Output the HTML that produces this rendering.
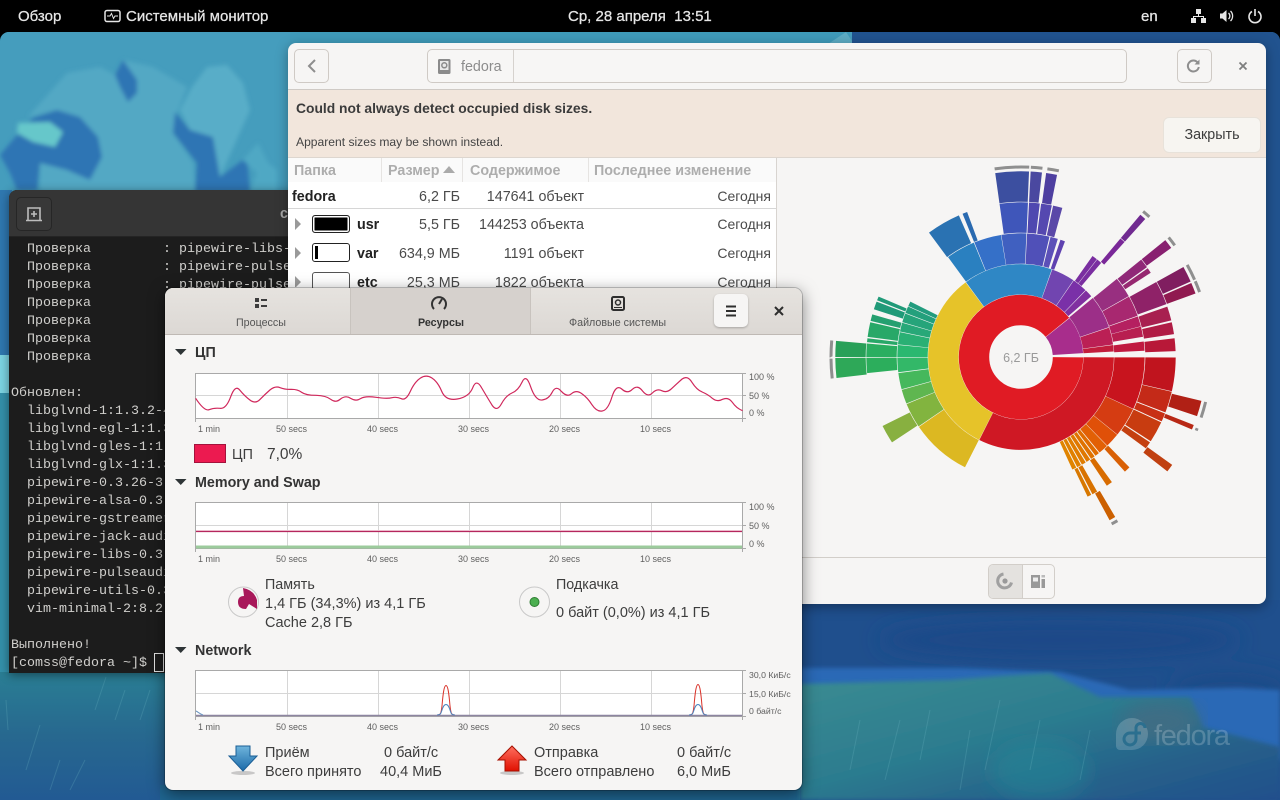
<!DOCTYPE html>
<html lang="ru"><head><meta charset="utf-8"><title>Системный монитор</title>
<style>
html,body{margin:0;padding:0;width:1280px;height:800px;overflow:hidden;background:#000;font-family:"Liberation Sans","Noto Sans CJK SC",sans-serif}
.a{position:absolute}
.t{position:absolute;white-space:nowrap;line-height:16px;font-size:14.3px;color:#3d3d3d;margin-top:1px}
.n{margin-top:0}
.b{font-weight:bold}
.r{text-align:right}
svg{position:absolute;display:block}
.h{font-size:14.3px;font-weight:bold;color:#adadad}
.sep{position:absolute;width:1px;background:#e6e4e2}
.bar{position:absolute;left:312px;width:36px;height:16px;border:1px solid #222;border-radius:3px;background:#fff}
.gt{font:9px "Liberation Sans",sans-serif;fill:#5e5e5e}
.top{font-size:15px;color:#e6e6e6;-webkit-text-stroke:.25px #e6e6e6}
.tab{font-size:10.7px;margin-top:0}
</style></head>
<body>
<div class="a" style="left:0;top:32px;width:1280px;height:768px;border-radius:9px 9px 0 0;overflow:hidden;background:#2a7a9c">
<svg width="1280" height="768" viewBox="0 32 1280 768" style="left:0;top:0">
<defs>
<filter id="bl"><feGaussianBlur stdDeviation="2"/></filter>
<filter id="bl2"><feGaussianBlur stdDeviation="10"/></filter>
<linearGradient id="gl" x1="0" y1="0" x2="0" y2="1"><stop offset="0" stop-color="#2a7e94"/><stop offset=".5" stop-color="#27688f"/><stop offset="1" stop-color="#225a93"/></linearGradient>
<linearGradient id="gr" x1="0" y1="0" x2="1" y2="1"><stop offset="0" stop-color="#3b8c92"/><stop offset=".45" stop-color="#2c7c8f"/><stop offset=".75" stop-color="#265f8a"/><stop offset="1" stop-color="#214f8c"/></linearGradient>
<linearGradient id="ab" x1="0" y1="0" x2="0" y2="1"><stop offset="0" stop-color="#6fb4dc"/><stop offset="1" stop-color="#1b6aa8"/></linearGradient>
<linearGradient id="ar" x1="0" y1="0" x2="0" y2="1"><stop offset="0" stop-color="#ff7060"/><stop offset="1" stop-color="#e01000"/></linearGradient>
</defs>
<rect x="0" y="32" width="860" height="170" fill="#459dbd"/>
<rect x="290" y="32" width="560" height="12" fill="#3f9ab9"/>
<polygon points="828,44 846,32 854,44" fill="#5dacc4"/>
<rect x="852" y="32" width="428" height="768" fill="#21538f"/>
<rect x="0" y="190" width="12" height="165" fill="#2f78b0"/>
<rect x="0" y="355" width="12" height="38" fill="#7cd4e2"/>
<rect x="0" y="393" width="12" height="280" fill="#3490aa"/>
<rect x="0" y="672" width="300" height="128" fill="url(#gl)"/>
<rect x="160" y="785" width="700" height="15" fill="#1f6590"/>
<rect x="800" y="600" width="480" height="200" fill="#1f4f8d"/>
<g filter="url(#bl2)"><ellipse cx="1060" cy="640" rx="180" ry="20" fill="#1a4a88"/><ellipse cx="1230" cy="690" rx="60" ry="18" fill="#1b4b88"/></g>
<polygon points="800,668 960,668 1060,672 1130,690 1240,688 1280,690 1280,760 800,760" fill="#2a69b6" filter="url(#bl)"/>
<polygon points="800,684 950,680 1000,676 1050,673 1100,697 1190,697 1203,727 1280,747 1280,800 800,800" fill="url(#gr)" filter="url(#bl)"/>
<ellipse cx="1160" cy="722" rx="40" ry="20" fill="#3f6d84" filter="url(#bl2)"/>
<ellipse cx="1040" cy="770" rx="50" ry="30" fill="#1d8a96" fill-opacity=".5" filter="url(#bl2)"/>
<g filter="url(#bl)">
<polygon points="0,155 17,135 33,118 57,110 80,117 98,137 102,157 90,180 67,170 40,163 37,190 17,190 10,173" fill="#2f74b4"/>
<polygon points="28,117 67,73 100,67 115,75 123,60 153,67 187,87 177,113 173,133 193,163 195,192 40,192 40,163 67,170 90,180 102,157 98,137 80,117 57,110" fill="#52a8c4"/>
<polygon points="115,75 123,60 137,80 137,93 128,102 120,87" fill="#2f74b4"/>
<polygon points="175,112 173,133 197,163 195,192 250,192 247,157 220,177 213,137 190,130" fill="#2f74b4"/>
<polygon points="192,87 207,67 227,65 243,83 250,110 220,177 213,137 190,130 180,110" fill="#58adc8"/>
<polygon points="243,160 258,143 268,163 277,170 277,192 250,192 257,173" fill="#50a8c4"/>
<polygon points="18,123 50,122 63,132 55,147 33,142 17,133" fill="#66c7ca"/>
</g>
<g stroke="#6fb6c4" stroke-opacity=".25" stroke-width="1" fill="none">
<path d="M106,677 L95,710M125,690 L115,720M40,725 L26,770M60,760 L50,790M150,690 L140,720M6,700 L8,730M85,760 L70,790M900,720 L885,780M930,710 L920,760M1000,700 L985,770M1040,720 L1030,770M970,730 L960,790M860,720 L850,770M1090,730 L1080,780"/>
</g>
<path d="M1148 734a16 16 0 1 0-32 0v12a4 4 0 0 0 4 4h12a16 16 0 0 0 16-16z" fill="#fff" fill-opacity=".18"/>
<path d="M1136 731v-3a4.500 4.500 0 0 1 9 0M1136 731v8a6 6 0 1 1-6-6h11" fill="none" stroke="#2b6f8f" stroke-width="3"/>
<text x="1154" y="745" font-family="Liberation Sans" font-size="29" fill="#fff" fill-opacity=".2" textLength="76">fedora</text>
</svg>
</div>

<!-- terminal -->
<div class="a" style="left:9px;top:190px;width:300px;height:483px;background:#1c1c1c;border-radius:8px 8px 0 0;overflow:hidden;box-shadow:0 2px 10px rgba(0,0,0,.45)">
<div class="a" style="left:0;top:0;width:300px;height:46px;background:#353535;border-bottom:1px solid #242424"></div>
<div class="a" style="left:7px;top:7px;width:34px;height:32px;background:#383838;border:1px solid #262626;border-radius:5px"></div>
<svg style="left:16px;top:15px" width="18" height="18" viewBox="0 0 18 18"><path d="M3 15V3h12v12M1 15.500h16" fill="none" stroke="#bdbdbd" stroke-width="1.600"/><path d="M9 6v6M6 9h6" stroke="#bdbdbd" stroke-width="1.600"/></svg>
<div class="t n" style="left:271px;top:16px;color:#a8a8a8;font-weight:bold">с</div>
<pre class="a" style="left:2px;top:51px;margin:0;font:13.33px/18px 'Liberation Mono','Noto Sans CJK SC',monospace;color:#d0cfcc">  Проверка         : pipewire-libs-0.3.26-3
  Проверка         : pipewire-pulseaudio-0
  Проверка         : pipewire-pulseaudio-0
  Проверка
  Проверка
  Проверка
  Проверка

Обновлен:
  libglvnd-1:1.3.2-4
  libglvnd-egl-1:1.3
  libglvnd-gles-1:1.3
  libglvnd-glx-1:1.3
  pipewire-0.3.26-3
  pipewire-alsa-0.3.26
  pipewire-gstreamer
  pipewire-jack-audio
  pipewire-libs-0.3
  pipewire-pulseaudio
  pipewire-utils-0.3
  vim-minimal-2:8.2

Выполнено!
[comss@fedora ~]$</pre>
<div class="a" style="left:145px;top:463px;width:8px;height:17px;border:1px solid #e0e0e0"></div>
</div>

<!-- baobab -->
<div class="a" style="left:288px;top:43px;width:978px;height:561px;background:#f6f5f4;border-radius:8px;overflow:hidden;box-shadow:0 3px 12px rgba(0,0,0,.35)"></div>
<div class="a" style="left:288px;top:89px;width:978px;height:1px;background:#cfcac5"></div>
<div class="a" style="left:288px;top:90px;width:978px;height:67px;background:#f2e6dc;border-bottom:1px solid #ddd6cf"></div>
<div class="a" style="left:294px;top:49px;width:33px;height:32px;border:1px solid #cfcac5;border-radius:5px;background:#f6f5f4"></div>
<svg style="left:305px;top:58px" width="14" height="16" viewBox="0 0 14 16"><path d="M10 2L4 8l6 6" fill="none" stroke="#8e8e8e" stroke-width="2"/></svg>
<div class="a" style="left:427px;top:49px;width:698px;height:32px;border:1px solid #cfcac5;border-radius:5px;background:#f7f6f5"></div>
<div class="a" style="left:513px;top:50px;width:1px;height:32px;background:#d6d2ce"></div>
<svg style="left:437px;top:58px" width="15" height="17" viewBox="0 0 15 17"><rect x="1" y="1" width="12.500" height="15" rx="1.500" fill="#8b8b8b"/><rect x="3" y="3" width="8.500" height="9" fill="#e9e9e9"/><circle cx="7.300" cy="7.300" r="2.500" fill="none" stroke="#8b8b8b" stroke-width="1.500"/></svg>
<div class="t" style="left:461px;top:58px;color:#8c8c8c">fedora</div>
<div class="a" style="left:1177px;top:49px;width:33px;height:32px;border:1px solid #cfcac5;border-radius:5px"></div>
<svg style="left:1186px;top:58px" width="15" height="16" viewBox="0 0 15 16"><path d="M12 5a5.500 5.500 0 1 0 .8 4" fill="none" stroke="#8e8e8e" stroke-width="2"/><path d="M13.500 1.500v5h-5z" fill="#8e8e8e"/></svg>
<svg style="left:1238px;top:61px" width="10" height="10" viewBox="0 0 10 10"><path d="M1.500 1.500l7 7M8.500 1.500l-7 7" stroke="#7e7e7e" stroke-width="1.800"/></svg>
<div class="t b n" style="left:296px;top:100px;color:#3b3b3b;font-size:13.85px">Could not always detect occupied disk sizes.</div>
<div class="t n" style="left:296px;top:134px;font-size:12.1px;color:#444">Apparent sizes may be shown instead.</div>
<div class="a" style="left:1164px;top:118px;width:96px;height:34px;background:#f7f5f1;border-radius:5px;box-shadow:0 0 0 1px #e8e2da;text-align:center;font-size:14.3px;line-height:34px;color:#3d3d3d">Закрыть</div>

<div class="a" style="left:288px;top:158px;width:488px;height:399px;background:#fff;border-right:1px solid #d8d4d0"></div>
<div class="a" style="left:288px;top:158px;width:488px;height:24px;background:#fafafa"></div>
<div class="sep" style="left:381px;top:158px;height:24px"></div><div class="sep" style="left:462px;top:158px;height:24px"></div><div class="sep" style="left:588px;top:158px;height:24px"></div>
<div class="t h" style="left:294px;top:162px">Папка</div>
<div class="t h" style="left:388px;top:162px">Размер</div>
<svg style="left:443px;top:166px" width="12" height="7"><path d="M0 7L6 0l6 7z" fill="#aaa"/></svg>
<div class="t h" style="left:470px;top:162px">Содержимое</div>
<div class="t h" style="left:594px;top:162px">Последнее изменение</div>
<div class="t b" style="left:292px;top:188px;color:#222">fedora</div>
<div class="t r" style="left:390px;top:188px;width:70px;color:#4a4a4a">6,2 ГБ</div>
<div class="t r" style="left:464px;top:188px;width:120px;color:#4a4a4a">147641 объект</div>
<div class="t r n" style="left:689px;top:188px;width:82px;color:#4a4a4a;font-size:14px">Сегодня</div>
<div class="a" style="left:288px;top:208px;width:488px;height:1px;background:#d6d6d6"></div>
<svg style="left:294px;top:217px" width="8" height="70"><path d="M1 1l6 6-6 6zM1 30l6 6-6 6zM1 59l6 6-6 6z" fill="#9a9a9a"/></svg>
<div class="bar" style="top:215px;background:#000;box-shadow:inset 0 0 0 1.500px #fff"></div>
<div class="bar" style="top:243px;height:17px"><div class="a" style="left:2px;top:2px;width:3px;height:13px;background:#000"></div></div>
<div class="bar" style="top:272px;border-color:#555"></div>
<div class="t b" style="left:357px;top:216px;color:#222">usr</div>
<div class="t b" style="left:357px;top:245px;color:#222">var</div>
<div class="t b" style="left:357px;top:274px;color:#222">etc</div>
<div class="t r" style="left:390px;top:216px;width:70px;color:#4a4a4a">5,5 ГБ</div>
<div class="t r" style="left:390px;top:245px;width:70px;color:#4a4a4a">634,9 МБ</div>
<div class="t r" style="left:390px;top:274px;width:70px;color:#4a4a4a">25,3 МБ</div>
<div class="t r" style="left:464px;top:216px;width:120px;color:#4a4a4a">144253 объекта</div>
<div class="t r" style="left:464px;top:245px;width:120px;color:#4a4a4a">1191 объект</div>
<div class="t r" style="left:464px;top:274px;width:120px;color:#4a4a4a">1822 объекта</div>
<div class="t r n" style="left:689px;top:216px;width:82px;color:#4a4a4a;font-size:14px">Сегодня</div>
<div class="t r n" style="left:689px;top:245px;width:82px;color:#4a4a4a;font-size:14px">Сегодня</div>
<div class="t r n" style="left:689px;top:274px;width:82px;color:#4a4a4a;font-size:14px">Сегодня</div>

<svg style="left:778px;top:158px" width="488" height="399" viewBox="778 158 488 399">
<g transform="translate(1021 357)" fill="none" stroke-width="30.400">
<circle r="47" pathLength="360" stroke="#e01b24" stroke-dasharray="320.5 999" stroke-dashoffset="-.3"/>
<circle r="47" pathLength="360" stroke="#a82d8c" stroke-dasharray="35 999" stroke-dashoffset="-321.3"/>
<circle r="77.700" pathLength="360" stroke="#cf1824" stroke-dasharray="116.6 999" stroke-dashoffset="-.2"/>
<circle r="77.700" pathLength="360" stroke="#e6c329" stroke-dasharray="116.7 999" stroke-dashoffset="-117"/>
<circle r="77.700" pathLength="360" stroke="#2f87c5" stroke-dasharray="55.7 999" stroke-dashoffset="-234"/>
<circle r="77.700" pathLength="360" stroke="#7145b0" stroke-dasharray="14.7 999" stroke-dashoffset="-290"/>
<circle r="77.700" pathLength="360" stroke="#7a30a8" stroke-dasharray="9.3 999" stroke-dashoffset="-305"/>
<circle r="77.700" pathLength="360" stroke="#8030a0" stroke-dasharray="4.8 999" stroke-dashoffset="-314.7"/>
<circle r="77.700" pathLength="360" stroke="#9c2f88" stroke-dasharray="20.6 999" stroke-dashoffset="-321"/>
<circle r="77.700" pathLength="360" stroke="#bb2055" stroke-dasharray="10.7 999" stroke-dashoffset="-342"/>
<circle r="77.700" pathLength="360" stroke="#c21d3c" stroke-dasharray="4 999" stroke-dashoffset="-353"/>
<circle r="108.500" pathLength="360" stroke="#c8141e" stroke-dasharray="24.6 999" stroke-dashoffset="-.2"/>
<circle r="108.500" pathLength="360" stroke="#d53c12" stroke-dasharray="13.8 999" stroke-dashoffset="-25"/>
<circle r="108.500" pathLength="360" stroke="#e05008" stroke-dasharray="6.8 999" stroke-dashoffset="-39"/>
<circle r="108.500" pathLength="360" stroke="#e26005" stroke-dasharray="4.6 999" stroke-dashoffset="-46"/>
<circle r="108.500" pathLength="360" stroke="#e06c00" stroke-dasharray="2 999" stroke-dashoffset="-51"/>
<circle r="108.500" pathLength="360" stroke="#e07200" stroke-dasharray="2 999" stroke-dashoffset="-53.5"/>
<circle r="108.500" pathLength="360" stroke="#e07800" stroke-dasharray="2 999" stroke-dashoffset="-56"/>
<circle r="108.500" pathLength="360" stroke="#e07c00" stroke-dasharray="2 999" stroke-dashoffset="-58.5"/>
<circle r="108.500" pathLength="360" stroke="#e08000" stroke-dasharray="2 999" stroke-dashoffset="-61"/>
<circle r="108.500" pathLength="360" stroke="#e08400" stroke-dasharray="2 999" stroke-dashoffset="-63.5"/>
<circle r="108.500" pathLength="360" stroke="#dcb822" stroke-dasharray="28.7 999" stroke-dashoffset="-117"/>
<circle r="108.500" pathLength="360" stroke="#82b43f" stroke-dasharray="11.7 999" stroke-dashoffset="-146"/>
<circle r="108.500" pathLength="360" stroke="#5fb650" stroke-dasharray="6.7 999" stroke-dashoffset="-158"/>
<circle r="108.500" pathLength="360" stroke="#45b85c" stroke-dasharray="7.6 999" stroke-dashoffset="-165"/>
<circle r="108.500" pathLength="360" stroke="#33b868" stroke-dasharray="6.7 999" stroke-dashoffset="-173"/>
<circle r="108.500" pathLength="360" stroke="#2ab870" stroke-dasharray="5.7 999" stroke-dashoffset="-180"/>
<circle r="108.500" pathLength="360" stroke="#2ab074" stroke-dasharray="5.7 999" stroke-dashoffset="-186"/>
<circle r="108.500" pathLength="360" stroke="#28a878" stroke-dasharray="4.2 999" stroke-dashoffset="-192"/>
<circle r="108.500" pathLength="360" stroke="#26a47a" stroke-dasharray="4.2 999" stroke-dashoffset="-196.5"/>
<circle r="108.500" pathLength="360" stroke="#24a07c" stroke-dasharray="3.2 999" stroke-dashoffset="-201"/>
<circle r="108.500" pathLength="360" stroke="#229c7e" stroke-dasharray="2.2 999" stroke-dashoffset="-204.5"/>
<circle r="108.500" pathLength="360" stroke="#2a80c0" stroke-dasharray="13.7 999" stroke-dashoffset="-234"/>
<circle r="108.500" pathLength="360" stroke="#3570c8" stroke-dasharray="12.8 999" stroke-dashoffset="-248"/>
<circle r="108.500" pathLength="360" stroke="#4060c0" stroke-dasharray="11.7 999" stroke-dashoffset="-261"/>
<circle r="108.500" pathLength="360" stroke="#5050b8" stroke-dasharray="10.5 999" stroke-dashoffset="-273"/>
<circle r="108.500" pathLength="360" stroke="#5c50b8" stroke-dasharray="3.5 999" stroke-dashoffset="-284"/>
<circle r="108.500" pathLength="360" stroke="#5f42b0" stroke-dasharray="2.2 999" stroke-dashoffset="-288.8"/>
<circle r="108.500" pathLength="360" stroke="#7a2ea0" stroke-dasharray="2.5 999" stroke-dashoffset="-305.5"/>
<circle r="108.500" pathLength="360" stroke="#7a2ea0" stroke-dasharray="2.4 999" stroke-dashoffset="-308.2"/>
<circle r="108.500" pathLength="360" stroke="#982f80" stroke-dasharray="9.7 999" stroke-dashoffset="-321"/>
<circle r="108.500" pathLength="360" stroke="#a82870" stroke-dasharray="9.7 999" stroke-dashoffset="-331"/>
<circle r="108.500" pathLength="360" stroke="#b52060" stroke-dasharray="4.8 999" stroke-dashoffset="-341"/>
<circle r="108.500" pathLength="360" stroke="#b81f50" stroke-dasharray="4.8 999" stroke-dashoffset="-346"/>
<circle r="108.500" pathLength="360" stroke="#c01a40" stroke-dasharray="4.3 999" stroke-dashoffset="-353"/>
<circle r="139.500" pathLength="360" stroke="#c0141e" stroke-dasharray="12.6 999" stroke-dashoffset="-.2"/>
<circle r="139.500" pathLength="360" stroke="#c42a18" stroke-dasharray="8 999" stroke-dashoffset="-13"/>
<circle r="139.500" pathLength="360" stroke="#c83015" stroke-dasharray="3.2 999" stroke-dashoffset="-21.4"/>
<circle r="139.500" pathLength="360" stroke="#c83c10" stroke-dasharray="8 999" stroke-dashoffset="-25"/>
<circle r="139.500" pathLength="360" stroke="#c44010" stroke-dasharray="2.7 999" stroke-dashoffset="-33.5"/>
<circle r="139.500" pathLength="360" stroke="#d96005" stroke-dasharray="2.3 999" stroke-dashoffset="-45.5"/>
<circle r="139.500" pathLength="360" stroke="#d86c00" stroke-dasharray="2.3 999" stroke-dashoffset="-54"/>
<circle r="139.500" pathLength="360" stroke="#d87200" stroke-dasharray="2 999" stroke-dashoffset="-60.5"/>
<circle r="139.500" pathLength="360" stroke="#d87800" stroke-dasharray="1.5 999" stroke-dashoffset="-63"/>
<circle r="139.500" pathLength="360" stroke="#88b040" stroke-dasharray="7 999" stroke-dashoffset="-146.5"/>
<circle r="139.500" pathLength="360" stroke="#2cae5c" stroke-dasharray="5.7 999" stroke-dashoffset="-174"/>
<circle r="139.500" pathLength="360" stroke="#2aae60" stroke-dasharray="5 999" stroke-dashoffset="-180"/>
<circle r="139.500" pathLength="360" stroke="#28a868" stroke-dasharray="1.5 999" stroke-dashoffset="-185.5"/>
<circle r="139.500" pathLength="360" stroke="#28a868" stroke-dasharray="5.5 999" stroke-dashoffset="-187.5"/>
<circle r="139.500" pathLength="360" stroke="#25a070" stroke-dasharray="2.5 999" stroke-dashoffset="-193.5"/>
<circle r="139.500" pathLength="360" stroke="#209a78" stroke-dasharray="3 999" stroke-dashoffset="-198"/>
<circle r="139.500" pathLength="360" stroke="#209a78" stroke-dasharray="1.5 999" stroke-dashoffset="-201.5"/>
<circle r="139.500" pathLength="360" stroke="#2a72b2" stroke-dasharray="12.8 999" stroke-dashoffset="-233.5"/>
<circle r="139.500" pathLength="360" stroke="#2a6ab0" stroke-dasharray="1.8 999" stroke-dashoffset="-247.8"/>
<circle r="139.500" pathLength="360" stroke="#3f56ba" stroke-dasharray="10.6 999" stroke-dashoffset="-262"/>
<circle r="139.500" pathLength="360" stroke="#4f48b0" stroke-dasharray="4 999" stroke-dashoffset="-273"/>
<circle r="139.500" pathLength="360" stroke="#5548b0" stroke-dasharray="4 999" stroke-dashoffset="-277.5"/>
<circle r="139.500" pathLength="360" stroke="#5a48a8" stroke-dasharray="3.5 999" stroke-dashoffset="-282"/>
<circle r="139.500" pathLength="360" stroke="#7a2898" stroke-dasharray="2 999" stroke-dashoffset="-310"/>
<circle r="139.500" pathLength="360" stroke="#902878" stroke-dasharray="3.5 999" stroke-dashoffset="-321"/>
<circle r="139.500" pathLength="360" stroke="#962870" stroke-dasharray="2 999" stroke-dashoffset="-325"/>
<circle r="139.500" pathLength="360" stroke="#8f2268" stroke-dasharray="9 999" stroke-dashoffset="-331"/>
<circle r="139.500" pathLength="360" stroke="#a82050" stroke-dasharray="5.3 999" stroke-dashoffset="-341"/>
<circle r="139.500" pathLength="360" stroke="#b01c45" stroke-dasharray="4.5 999" stroke-dashoffset="-347"/>
<circle r="139.500" pathLength="360" stroke="#b81838" stroke-dasharray="4.8 999" stroke-dashoffset="-353"/>
<circle r="170.500" pathLength="360" stroke="#b02015" stroke-dasharray="4.9 999" stroke-dashoffset="-13.7"/>
<circle r="170.500" pathLength="360" stroke="#b82815" stroke-dasharray="1.5 999" stroke-dashoffset="-21.5"/>
<circle r="170.500" pathLength="360" stroke="#c04010" stroke-dasharray="2.5 999" stroke-dashoffset="-35.5"/>
<circle r="170.500" pathLength="360" stroke="#cc6000" stroke-dasharray="2 999" stroke-dashoffset="-59.5"/>
<circle r="170.500" pathLength="360" stroke="#2ea858" stroke-dasharray="6.2 999" stroke-dashoffset="-173.5"/>
<circle r="170.500" pathLength="360" stroke="#28a058" stroke-dasharray="5 999" stroke-dashoffset="-180"/>
<circle r="170.500" pathLength="360" stroke="#3c4fa0" stroke-dasharray="10.5 999" stroke-dashoffset="-262"/>
<circle r="170.500" pathLength="360" stroke="#4a48a0" stroke-dasharray="3.5 999" stroke-dashoffset="-273"/>
<circle r="170.500" pathLength="360" stroke="#4e3fa0" stroke-dasharray="3.4 999" stroke-dashoffset="-277.8"/>
<circle r="170.500" pathLength="360" stroke="#702a90" stroke-dasharray="2 999" stroke-dashoffset="-310"/>
<circle r="170.500" pathLength="360" stroke="#882070" stroke-dasharray="3 999" stroke-dashoffset="-321"/>
<circle r="170.500" pathLength="360" stroke="#801e60" stroke-dasharray="5 999" stroke-dashoffset="-331"/>
<circle r="170.500" pathLength="360" stroke="#901a50" stroke-dasharray="3.5 999" stroke-dashoffset="-336.5"/>
<g stroke="#8f8f8f" stroke-width="3">
<circle r="190" pathLength="360" stroke-dasharray="4.9 999" stroke-dashoffset="-13.7"/>
<circle r="190" pathLength="360" stroke-dasharray=".8 999" stroke-dashoffset="-22"/>
<circle r="190" pathLength="360" stroke-dasharray="2 999" stroke-dashoffset="-59.5"/>
<circle r="190" pathLength="360" stroke-dasharray="6 999" stroke-dashoffset="-173.5"/>
<circle r="190" pathLength="360" stroke-dasharray="5 999" stroke-dashoffset="-180"/>
<circle r="190" pathLength="360" stroke-dasharray="10.5 999" stroke-dashoffset="-262"/>
<circle r="190" pathLength="360" stroke-dasharray="3.5 999" stroke-dashoffset="-273"/>
<circle r="190" pathLength="360" stroke-dasharray="3.5 999" stroke-dashoffset="-278"/>
<circle r="190" pathLength="360" stroke-dasharray="2.5 999" stroke-dashoffset="-310"/>
<circle r="190" pathLength="360" stroke-dasharray="3 999" stroke-dashoffset="-321"/>
<circle r="190" pathLength="360" stroke-dasharray="5 999" stroke-dashoffset="-331"/>
<circle r="190" pathLength="360" stroke-dasharray="3.5 999" stroke-dashoffset="-336.5"/>
</g>
</g>
<text x="1021" y="362" text-anchor="middle" font-family="Liberation Sans" font-size="12.500" fill="#9a9a9a">6,2 ГБ</text>
</svg>
<div class="a" style="left:777px;top:557px;width:489px;height:1px;background:#d2cec9"></div>
<div class="a" style="left:988px;top:564px;width:65px;height:33px;border:1px solid #d2cec9;border-radius:5px;overflow:hidden"><div class="a" style="left:0;top:0;width:33px;height:33px;background:#e4e2df;border-right:1px solid #d2cec9"></div></div>
<svg style="left:996px;top:572px" width="18" height="18" viewBox="0 0 18 18"><circle cx="9" cy="9" r="2.600" fill="#999"/><path d="M15.500 10.500A7 7 0 1 1 7.500 2" fill="none" stroke="#a0a0a0" stroke-width="3"/></svg>
<svg style="left:1030px;top:574px" width="16" height="15" viewBox="0 0 16 15"><rect x="1" y="1" width="9" height="13" fill="#999"/><rect x="3" y="3.500" width="5" height="4" fill="#eee"/><rect x="11.500" y="5" width="3.500" height="9" fill="#999"/><rect x="11.500" y="1" width="3.500" height="2.500" fill="#bbb"/></svg>

<!-- system monitor -->
<div class="a" style="left:165px;top:288px;width:637px;height:502px;background:#f6f5f4;border-radius:8px;overflow:hidden;box-shadow:0 4px 16px rgba(0,0,0,.5),0 0 0 1px rgba(0,0,0,.2)">
<div class="a" style="left:0;top:0;width:637px;height:46px;background:linear-gradient(#e6e3df,#dcd8d4);border-bottom:1px solid #bfb9b4"></div>
<div class="a" style="left:185px;top:0;width:179px;height:46px;background:#d6d1cd;border-left:1px solid #c8c3be;border-right:1px solid #c8c3be"></div>
</div>
<svg style="left:254px;top:297px" width="14" height="12" viewBox="0 0 14 12"><rect x="1" y="1" width="4" height="4" fill="#3d3d3d"/><rect x="1" y="7" width="4" height="4" fill="#3d3d3d"/><rect x="7" y="2" width="6" height="2" fill="#3d3d3d"/><rect x="7" y="8" width="6" height="2" fill="#3d3d3d"/></svg>
<svg style="left:430px;top:295px" width="18" height="16" viewBox="0 0 18 16"><path d="M4 14A7 7 0 1 1 14 14" fill="none" stroke="#333" stroke-width="2"/><path d="M9 9l3-5" stroke="#333" stroke-width="2"/></svg>
<svg style="left:611px;top:296px" width="14" height="15" viewBox="0 0 14 15"><rect x="1" y="1" width="12" height="13" rx="1.500" fill="none" stroke="#2e2e2e" stroke-width="2"/><circle cx="7" cy="6.500" r="2.500" fill="none" stroke="#2e2e2e" stroke-width="1.500"/><path d="M3 11.500h8" stroke="#2e2e2e"/></svg>
<div class="t tab" style="left:236px;top:315px;color:#555">Процессы</div>
<div class="t b tab" style="left:418px;top:315px;color:#333">Ресурсы</div>
<div class="t tab" style="left:569px;top:315px;color:#555">Файловые системы</div>
<div class="a" style="left:714px;top:294px;width:34px;height:33px;background:#f6f5f4;border-radius:5px;box-shadow:0 1px 2px rgba(0,0,0,.25)"></div>
<svg style="left:726px;top:305px" width="10" height="12"><path d="M0 1.500h10M0 6h10M0 10.500h10" stroke="#2e2e2e" stroke-width="2"/></svg>
<svg style="left:774px;top:306px" width="10" height="10" viewBox="0 0 10 10"><path d="M1 1l8 8M9 1l-8 8" stroke="#2e2e2e" stroke-width="2"/></svg>

<svg style="left:165px;top:335px" width="637" height="455" viewBox="165 335 637 455">
<path d="M175 349h11.500l-5.750 6zM175 479h11.500l-5.750 6zM175 647h11.500l-5.750 6z" fill="#2e3436"/>
<g fill="#fff" stroke="#a9a9a9"><rect x="195.500" y="373.500" width="547" height="45"/><rect x="195.500" y="502.500" width="547" height="46"/><rect x="195.500" y="670.500" width="547" height="46"/></g>
<g stroke="#d6d6d6" fill="none">
<path d="M287.500 374v44M378.500 374v44M469.500 374v44M560.500 374v44M651.500 374v44M196 395.500h546"/>
<path d="M287.500 503v45M378.500 503v45M469.500 503v45M560.500 503v45M651.500 503v45M196 525.500h546"/>
<path d="M287.500 671v45M378.500 671v45M469.500 671v45M560.500 671v45M651.500 671v45M196 693.500h546"/>
</g>
<g stroke="#a9a9a9"><path d="M195.500 418v4M742.500 418v4M742 373.500h4M742 395.500h4M742 418.500h4M195.500 548v4M742.500 548v4M742 502.500h4M742 525.500h4M742 548.500h4M195.500 716v4M742.500 716v4M742 670.500h4M742 693.500h4M742 716.500h4"/></g>
<g class="gt">
<text class="gt" x="749" y="380">100 %</text><text class="gt" x="749" y="399">50 %</text><text class="gt" x="749" y="416">0 %</text>
<text class="gt" x="198" y="432">1 min</text><text class="gt" x="276" y="432">50 secs</text><text class="gt" x="367" y="432">40 secs</text><text class="gt" x="458" y="432">30 secs</text><text class="gt" x="549" y="432">20 secs</text><text class="gt" x="640" y="432">10 secs</text>
<text class="gt" x="749" y="510">100 %</text><text class="gt" x="749" y="529">50 %</text><text class="gt" x="749" y="547">0 %</text>
<text class="gt" x="198" y="562">1 min</text><text class="gt" x="276" y="562">50 secs</text><text class="gt" x="367" y="562">40 secs</text><text class="gt" x="458" y="562">30 secs</text><text class="gt" x="549" y="562">20 secs</text><text class="gt" x="640" y="562">10 secs</text>
<text class="gt" x="749" y="678" style="font-size:8.700px">30,0 КиБ/с</text><text class="gt" x="749" y="697" style="font-size:8.700px">15,0 КиБ/с</text><text class="gt" x="749" y="714" style="font-size:8.700px">0 байт/с</text>
<text class="gt" x="198" y="730">1 min</text><text class="gt" x="276" y="730">50 secs</text><text class="gt" x="367" y="730">40 secs</text><text class="gt" x="458" y="730">30 secs</text><text class="gt" x="549" y="730">20 secs</text><text class="gt" x="640" y="730">10 secs</text>
</g>
<g transform="translate(165 285) scale(.40816 .33333)"><path vector-effect="non-scaling-stroke" fill="none" stroke="#d0285c" stroke-width="1.200" d="M75,340Q97,380 108,374Q120,368 135,370Q150,372 161,335Q172,298 183,315Q195,333 208,345Q222,358 233,343Q245,328 257,315Q270,302 282,308Q295,314 310,313Q325,313 335,322Q345,331 370,331Q395,332 406,343Q418,355 430,342Q443,330 455,340Q468,350 479,341Q490,332 517,337Q545,342 556,338Q568,335 579,341Q590,348 601,319Q612,290 626,279Q640,268 654,279Q668,290 678,319Q688,348 716,342Q745,336 754,308Q763,280 776,309Q790,338 801,360Q813,382 824,357Q835,332 850,324Q865,317 875,291Q885,265 896,306Q908,348 924,345Q940,343 949,321Q958,300 971,319Q985,338 996,326Q1008,314 1021,326Q1035,338 1046,359Q1058,381 1071,378Q1085,376 1095,336Q1105,297 1119,312Q1133,328 1145,313Q1158,298 1170,318Q1183,338 1194,324Q1205,310 1217,317Q1230,325 1242,310Q1255,295 1267,282Q1280,270 1291,292Q1303,315 1316,321Q1330,328 1341,340Q1353,352 1366,343Q1380,335 1390,352Q1400,370 1415,377"/></g>
<path d="M196 530.500H742" stroke="#f3cfdb" stroke-width="1"/><path d="M196 531.500H742" stroke="#b5275e" stroke-width="1.200"/>
<path d="M196 547H742" stroke="#9ccb9c" stroke-width="3"/>
<path d="M196 715.500H742" stroke="#8d85a0" stroke-width="1.600"/>
<path d="M196 711c2 1 4 3 7 4" fill="none" stroke="#6a94c0"/>
<path d="M437 715C441 715 441 713 442 706C443 694 444 685.500 446 685.500C448 685.500 449 694 450 706C451 713 451 715 455 715" fill="none" stroke="#d9342b" stroke-width="1"/>
<path d="M437 715C441 715 441 713 442 710C443 707 444 704.500 446 704.500C448 704.500 449 707 450 710C451 713 451 715 455 715" fill="none" stroke="#4a86c0" stroke-width="1"/>
<path d="M689 715C693 715 693 713 694 706C695 694 696 684.500 698 684.500C700 684.500 701 694 702 706C703 713 703 715 707 715" fill="none" stroke="#d9342b" stroke-width="1"/>
<path d="M689 715C693 715 693 713 694 710C695 707 696 704.500 698 704.500C700 704.500 701 707 702 710C703 713 703 715 707 715" fill="none" stroke="#4a86c0" stroke-width="1"/>
<rect x="194.500" y="444.500" width="31" height="18" fill="#ec1a50" stroke="#a3123c"/>
<circle cx="243.500" cy="602" r="15" fill="#f6f5f4" stroke="#c9c9c9"/>
<path d="M243 588Q254 590 257 600L257 609L249 604L246 609Q238 609 238 602Q238 596 244 596Z" fill="#a8185a"/>
<circle cx="534.500" cy="602" r="15" fill="#f6f5f4" stroke="#c9c9c9"/>
<circle cx="534.500" cy="602" r="4.500" fill="#4caf50" stroke="#2e7d32"/>
<ellipse cx="243" cy="773" rx="12" ry="2" fill="#999" opacity=".5"/><ellipse cx="512" cy="773" rx="12" ry="2" fill="#999" opacity=".5"/>
<path d="M236 746h14v10h7l-14 15-14-15h7z" fill="url(#ab)" stroke="#1b5e95"/>
<path d="M505 771v-11h-7l14-14 14 14h-7v11z" fill="url(#ar)" stroke="#a51000"/>
</svg>
<div class="t b" style="left:195px;top:344px;color:#333">ЦП</div>
<div class="t b" style="left:195px;top:474px;color:#333">Memory and Swap</div>
<div class="t b" style="left:195px;top:642px;color:#333">Network</div>
<div class="t" style="left:232px;top:446px">ЦП</div>
<div class="t" style="left:267px;top:446px;font-size:15.5px">7,0%</div>
<div class="t" style="left:265px;top:576px">Память</div>
<div class="t" style="left:265px;top:595px;font-size:14.5px">1,4 ГБ (34,3%) из 4,1 ГБ</div>
<div class="t" style="left:265px;top:614px;font-size:14.5px">Cache 2,8 ГБ</div>
<div class="t" style="left:556px;top:576px">Подкачка</div>
<div class="t" style="left:556px;top:604px;font-size:14.5px">0 байт (0,0%) из 4,1 ГБ</div>
<div class="t" style="left:265px;top:744px;font-size:14.5px">Приём</div>
<div class="t" style="left:265px;top:763px;font-size:14.5px">Всего принято</div>
<div class="t" style="left:384px;top:744px;font-size:14.5px">0 байт/с</div>
<div class="t" style="left:380px;top:763px;font-size:14.5px">40,4 МиБ</div>
<div class="t" style="left:534px;top:744px;font-size:14.5px">Отправка</div>
<div class="t" style="left:534px;top:763px;font-size:14.5px">Всего отправлено</div>
<div class="t" style="left:677px;top:744px;font-size:14.5px">0 байт/с</div>
<div class="t" style="left:677px;top:763px;font-size:14.5px">6,0 МиБ</div>

<!-- top bar -->
<div class="a" style="left:0;top:0;width:1280px;height:32px;background:#000"></div>
<div class="t top" style="left:18px;top:8px">Обзор</div>
<svg style="left:104px;top:9px" width="17" height="14" viewBox="0 0 17 14"><rect x="1" y="1.500" width="15" height="11" rx="2" fill="none" stroke="#e6e6e6" stroke-width="1.500"/><path d="M3 7h3l1.500-2.500 2 5L11 7h3" fill="none" stroke="#e6e6e6"/></svg>
<div class="t top" style="left:126px;top:8px">Системный монитор</div>
<div class="t top" style="left:568px;top:8px">Ср, 28 апреля&nbsp; 13:51</div>
<div class="t top" style="left:1141px;top:8px">en</div>
<svg style="left:1190px;top:8px" width="17" height="16" viewBox="0 0 17 16"><rect x="6" y="1" width="5" height="5" fill="#e6e6e6"/><rect x="1" y="10" width="5" height="5" fill="#e6e6e6"/><rect x="11" y="10" width="5" height="5" fill="#e6e6e6"/><path d="M8.500 6v2.500M3.500 10V8.500h10V10" fill="none" stroke="#e6e6e6"/></svg>
<svg style="left:1219px;top:9px" width="16" height="14" viewBox="0 0 16 14"><path d="M1 4.500h2.500L7.500 1v12L3.500 9.500H1z" fill="#e6e6e6"/><path d="M9.500 4a4 4 0 0 1 0 6M11.500 2a7 7 0 0 1 0 10" fill="none" stroke="#e6e6e6" stroke-width="1.300"/></svg>
<svg style="left:1247px;top:8px" width="16" height="16" viewBox="0 0 16 16"><path d="M5 3.500a6 6 0 1 0 6 0M8 1v7" fill="none" stroke="#e6e6e6" stroke-width="1.600"/></svg>
</body></html>
